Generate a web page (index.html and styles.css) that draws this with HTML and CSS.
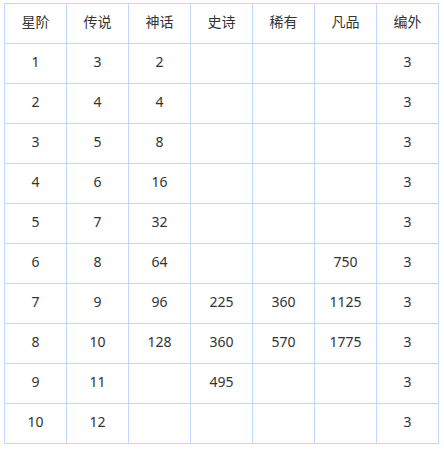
FILE: index.html
```html
<!DOCTYPE html>
<html>
<head>
<meta charset="utf-8">
<link rel="stylesheet" href="styles.css">
</head>
<body>
<table class="grid">
<thead>
<tr><th>星阶</th><th>传说</th><th>神话</th><th>史诗</th><th>稀有</th><th>凡品</th><th>编外</th></tr>
</thead>
<tbody>
<tr><td>1</td><td>3</td><td>2</td><td></td><td></td><td></td><td>3</td></tr>
<tr><td>2</td><td>4</td><td>4</td><td></td><td></td><td></td><td>3</td></tr>
<tr><td>3</td><td>5</td><td>8</td><td></td><td></td><td></td><td>3</td></tr>
<tr><td>4</td><td>6</td><td>16</td><td></td><td></td><td></td><td>3</td></tr>
<tr><td>5</td><td>7</td><td>32</td><td></td><td></td><td></td><td>3</td></tr>
<tr><td>6</td><td>8</td><td>64</td><td></td><td></td><td>750</td><td>3</td></tr>
<tr><td>7</td><td>9</td><td>96</td><td>225</td><td>360</td><td>1125</td><td>3</td></tr>
<tr><td>8</td><td>10</td><td>128</td><td>360</td><td>570</td><td>1775</td><td>3</td></tr>
<tr><td>9</td><td>11</td><td></td><td>495</td><td></td><td></td><td>3</td></tr>
<tr><td>10</td><td>12</td><td></td><td></td><td></td><td></td><td>3</td></tr>
</tbody>
</table>
</body>
</html>
```

FILE: styles.css
```css
html, body {
  margin: 0;
  padding: 0;
  background: #ffffff;
}
body {
  padding: 3px 0 0 4px;
  font-family: "Noto Sans", "Noto Sans CJK SC", sans-serif;
  font-size: 14px;
  color: #333333;
}
.grid {
  border-collapse: collapse;
  table-layout: fixed;
  width: 435px;
}
.grid th, .grid td {
  border: 1px solid #bfd8fd;
  width: 61px;
  height: 35px;
  padding: 0 0 4px 0;
  text-align: center;
  vertical-align: middle;
  font-weight: normal;
  line-height: 20px;
}
```
